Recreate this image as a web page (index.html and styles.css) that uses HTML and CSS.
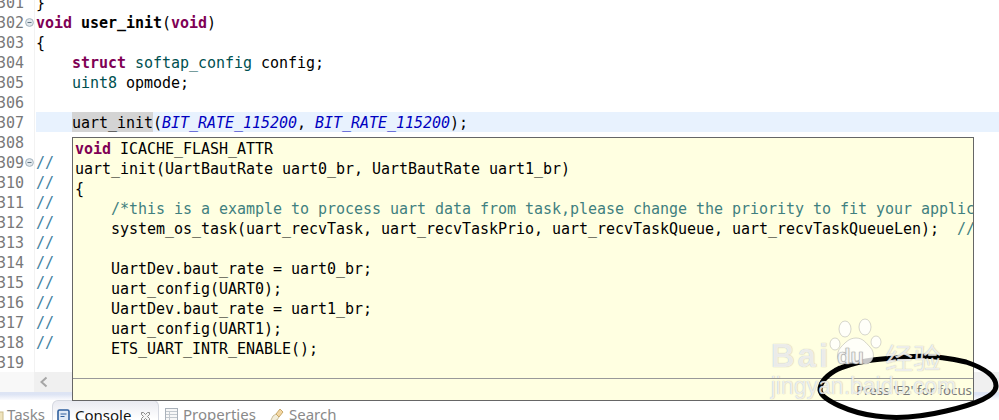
FILE: index.html
```html
<!DOCTYPE html>
<html>
<head>
<meta charset="utf-8">
<title>Editor</title>
<link rel="stylesheet" href="styles.css">
</head>
<body>
<div class="app">
  <div class="editor">
    <div class="code">
      <div class="row"><span class="num">301</span><span class="fold"></span><span class="src">}</span></div>
      <div class="row"><span class="num">302</span><span class="fold"><svg width="9" height="9" viewBox="0 0 9 9"><circle cx="4.5" cy="4.5" r="3.9" fill="#e3e9ee" stroke="#a4b3be"/><path d="M2.5 4.5h4" stroke="#5f7482"/></svg></span><span class="src"><b class="kw">void</b> <b>user_init</b>(<b class="kw">void</b>)</span></div>
      <div class="row"><span class="num">303</span><span class="fold"></span><span class="src">{</span></div>
      <div class="row"><span class="num">304</span><span class="fold"></span><span class="src">    <b class="kw">struct</b> <span class="type">softap_config</span> config;</span></div>
      <div class="row"><span class="num">305</span><span class="fold"></span><span class="src">    <span class="type">uint8</span> opmode;</span></div>
      <div class="row"><span class="num">306</span><span class="fold"></span><span class="src"></span></div>
      <div class="row"><span class="num">307</span><span class="fold"></span><span class="src cur">    <span class="occ">uart_init</span>(<i class="mac">BIT_RATE_115200</i>, <i class="mac">BIT_RATE_115200</i>);</span></div>
      <div class="row"><span class="num">308</span><span class="fold"></span><span class="src"></span></div>
      <div class="row"><span class="num">309</span><span class="fold"><svg width="9" height="9" viewBox="0 0 9 9"><circle cx="4.5" cy="4.5" r="3.9" fill="#e3e9ee" stroke="#a4b3be"/><path d="M2.5 4.5h4" stroke="#5f7482"/></svg></span><span class="src cmt">//</span></div>
      <div class="row"><span class="num">310</span><span class="fold"></span><span class="src cmt">//</span></div>
      <div class="row"><span class="num">311</span><span class="fold"></span><span class="src cmt">//</span></div>
      <div class="row"><span class="num">312</span><span class="fold"></span><span class="src cmt">//</span></div>
      <div class="row"><span class="num">313</span><span class="fold"></span><span class="src cmt">//</span></div>
      <div class="row"><span class="num">314</span><span class="fold"></span><span class="src cmt">//</span></div>
      <div class="row"><span class="num">315</span><span class="fold"></span><span class="src cmt">//</span></div>
      <div class="row"><span class="num">316</span><span class="fold"></span><span class="src cmt">//</span></div>
      <div class="row"><span class="num">317</span><span class="fold"></span><span class="src cmt">//</span></div>
      <div class="row"><span class="num">318</span><span class="fold"></span><span class="src cmt">//</span></div>
      <div class="row"><span class="num">319</span><span class="fold"></span><span class="src"></span></div>
    </div>
    <div class="hscroll">
      <div class="hscroll-gutter"></div>
      <div class="hscroll-track"><svg width="10" height="12" viewBox="0 0 10 12"><path d="M7.5 1.5 2.5 6l5 4.5" fill="none" stroke="#a6a6a6" stroke-width="2"/></svg></div>
    </div>
  </div>
  <div class="strip"></div>
  <div class="tabs">
    <div class="tab first"><svg class="ico-task" width="4" height="13" viewBox="0 0 4 13"><rect x="-4" y="1" width="7" height="12" fill="#efe3bd" stroke="#cdbd8c"/></svg><span>Tasks</span></div>
    <div class="tab active"><svg width="13" height="13" viewBox="0 0 13 13"><rect x="1" y="1" width="11" height="11" rx="1.5" fill="#dfe9f5" stroke="#2f5f9e" stroke-width="1.6"/><path d="M3.5 5h6M3.5 7.5h4" stroke="#2f5f9e"/></svg><span>Console</span><svg class="close" width="11" height="11" viewBox="0 0 11 11"><path d="M1.5 1.5h2l2 2 2-2h2v2l-2 2 2 2v2h-2l-2-2-2 2h-2v-2l2-2-2-2z" fill="#f4f4f4" stroke="#8b8b8b"/></svg></div>
    <div class="tab props"><svg width="13" height="14" viewBox="0 0 13 14"><rect x=".5" y=".5" width="12" height="13" fill="#f7f7f7" stroke="#a9b1ba"/><path d="M1 3.5h11M1 6.5h11M1 9.5h11M4.5 4v10" stroke="#c3c9cf"/></svg><span>Properties</span></div>
    <div class="tab"><svg width="15" height="15" viewBox="0 0 15 15"><path d="M1 14 4 8l3-2 3 3-2 3z" fill="#f2ecd8" stroke="#c9bd98"/><path d="M7 6l4-5 3 3-4 5z" fill="#f3d7a4" stroke="#c9a96a"/></svg><span>Search</span></div>
  </div>

  <div class="hover">
    <pre class="hover-text"><b class="kw">void</b> ICACHE_FLASH_ATTR
uart_init(UartBautRate uart0_br, UartBautRate uart1_br)
{
    <span class="doc">/*this is a example to process uart data from task,please change the priority to fit your application task</span>
    system_os_task(uart_recvTask, uart_recvTaskPrio, uart_recvTaskQueue, uart_recvTaskQueueLen);  <span class="doc">//</span>

    UartDev.baut_rate = uart0_br;
    uart_config(UART0);
    UartDev.baut_rate = uart1_br;
    uart_config(UART1);
    ETS_UART_INTR_ENABLE();
</pre>
    <div class="hover-foot">Press 'F2' for focus</div>
  </div>

  <svg class="ellipse" width="184" height="72" viewBox="0 0 184 72"><path d="M20 20C40 11 60 9 80 8c20-3 45-2 70 4 15 5 30 13 30 24 0 10-20 18-50 25-25 6-50 8-70 5C35 63 5 50 4 40c0-8 8-16 20-22" fill="none" stroke="#000" stroke-width="5" stroke-linecap="round"/></svg>

  <div class="mark">
    <div class="mark-top">
      <span class="mark-bai">Bai</span>
      <svg class="paw" width="54" height="48" viewBox="0 0 54 48"><g class="paw-shape"><ellipse cx="6" cy="26" rx="5" ry="6"/><ellipse cx="16" cy="11" rx="6" ry="8"/><ellipse cx="36" cy="9" rx="6" ry="8"/><ellipse cx="47" cy="24" rx="5" ry="6"/><path d="M27 20c7 0 10 5 14 9 6 6 4 17-5 17-3 0-6-1-9-1s-6 1-10 1c-9 0-11-11-5-17 4-4 8-9 15-9z"/></g><text class="paw-du" x="8" y="46">du</text></svg>
      <span class="mark-cn">经验</span>
    </div>
    <div class="mark-url">jingyan.baidu.com</div>
  </div>
</div>
</body>
</html>
```

FILE: styles.css
```css
* { box-sizing: border-box; }
html, body { margin: 0; padding: 0; }
body { width: 999px; height: 420px; overflow: hidden; background: #fff; }
.app { position: relative; width: 999px; height: 420px; overflow: hidden; font-family: "DejaVu Sans Mono", "Liberation Mono", monospace; }
.editor { height: 392px; overflow: hidden; display: flex; flex-direction: column; justify-content: flex-end; background: #fff; }
.code { display: flex; flex-direction: column; flex: none; }
.row { display: flex; flex: none; height: 20px; line-height: 22px; font-size: 15px; letter-spacing: -0.03px; color: #000; }
.num { width: 24px; flex: none; display: flex; justify-content: flex-end; color: #787878; }
.fold { width: 11px; flex: none; display: flex; align-items: center; padding: 1px 0 0 1px; border-right: 1px solid #f2f2f2; }
.fold svg { flex: none; }
.src { flex: 1; margin-left: 1px; white-space: pre; }
.src.cur { background: #e8f2fe; }
.occ { display: inline-block; height: 20px; vertical-align: top; background: #d4d4d4; }
b { font-weight: 700; }
.kw { color: #7f0055; }
.type { color: #005050; }
.mac { color: #0000c0; font-style: italic; }
.cmt { color: #3f7f9f; }
.hscroll { height: 20px; flex: none; display: flex; }
.hscroll-gutter { width: 34px; background: #f8f8f8; }
.hscroll-track { flex: 1; background: #f0f0f0; padding-left: 5px; display: flex; align-items: center; }
.strip { height: 8px; background: linear-gradient(#dde4f4 0, #dde4f4 30%, #fbfbfe 100%); }
.tabs { height: 20px; overflow: hidden; display: flex; font-family: "Noto Sans", Arial, sans-serif; font-size: 15px; line-height: 20px; color: #8a8a8a; background: #fff; }
.tab { height: 30px; display: flex; align-items: flex-start; padding: 4px 0 0 6px; white-space: nowrap; flex: none; }
.tab svg { flex: none; margin: 4px 5px 0 0; }
.tab.first { width: 52px; padding-left: 0; }
.tab.first .ico-task { margin: 7px 3px 0 0; }
.tab.active { width: 107px; padding-left: 4px; color: #111; border: 1px solid #d5d8e0; border-bottom: 0; border-radius: 6px 6px 0 0; background: linear-gradient(#e9eaf1, #fff 18px); }
.tab .close { margin: 6px 0 0 9px; }
.tab.props { width: 104px; }
.hover { position: absolute; left: 72px; top: 137px; width: 902px; height: 264px; background: #ffffe1; border: 1px solid #666; display: flex; flex-direction: column; overflow: hidden; }
.hover-text { flex: 1; margin: 0; padding: 1px 0 0 2px; font: 15px/20px "DejaVu Sans Mono", "Liberation Mono", monospace; letter-spacing: -0.03px; color: #000; overflow: hidden; white-space: pre; }
.doc { color: #3f7f7f; }
.hover-foot { height: 22px; flex: none; border-top: 1px solid #999; text-align: right; padding-right: 1px; font: 13.3px/23px "Noto Sans", Arial, sans-serif; color: #7b7b7b; white-space: nowrap; }
.ellipse { position: absolute; left: 816px; top: 350px; }
.mark { position: absolute; left: 771px; top: 318px; width: 190px; color: rgba(255,255,255,.8); font-family: "Liberation Sans", Arial, sans-serif; text-shadow: 0 0 1px rgba(110,110,110,.6); }
.mark-top { display: flex; align-items: flex-end; height: 54px; }
.mark-bai { font-size: 33px; line-height: 33px; font-weight: 700; letter-spacing: 3px; }
.paw { flex: none; margin: 0 0 6px -2px; }
.paw-shape { fill: rgba(255,255,255,.78); stroke: rgba(120,120,120,.3); }
.paw-du { font-family: "Liberation Sans", Arial, sans-serif; font-size: 22px; font-weight: 700; fill: rgba(255,255,255,.9); stroke: rgba(120,120,120,.45); stroke-width: .6px; }
.mark-cn { flex: none; font-family: "Noto Sans CJK SC", sans-serif; font-size: 28px; line-height: 36px; margin: 0 0 -3px 2px; }
.mark-url { font-size: 23px; line-height: 26px; margin-top: 1px; white-space: nowrap; }
```
